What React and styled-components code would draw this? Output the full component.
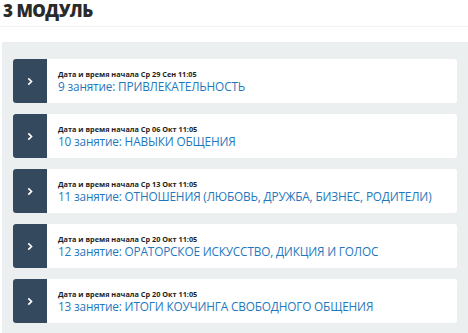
import React from "react";
import styled, { createGlobalStyle } from "styled-components";

const Global = createGlobalStyle`
  html, body { margin: 0; padding: 0; background: #fff; }
  body { font-family: "Open Sans", "Liberation Sans", sans-serif; }
`;

const Page = styled.div`
  width: 468px;
  height: 333px;
  overflow: hidden;
  display: flex;
  flex-direction: column;
`;

const Header = styled.div`
  height: 27px;
  border-bottom: 1px solid #f1f3f3;
  display: flex;
  align-items: flex-start;
  padding-left: 3px;
`;

const Title = styled.h2`
  margin: 0;
  font-family: "Open Sans", sans-serif;
  font-weight: 800;
  font-size: 17px;
  line-height: 22px;
  color: #2a2a2a;
  letter-spacing: -0.5px;
`;

const Panel = styled.div`
  margin: 15px 0 0 2px;
  background: #eceff0;
  padding: 17px 11px 10px 11px;
  display: flex;
  flex-direction: column;
  gap: 11px;
  flex: 1;
`;

const Card = styled.div`
  height: 44px;
  background: #fff;
  border-radius: 3px;
  display: flex;
  overflow: hidden;
`;

const Toggle = styled.div`
  width: 34px;
  flex: none;
  background: #34495e;
  display: flex;
  align-items: center;
  justify-content: center;
  color: #fff;
`;

const Body = styled.div`
  padding-left: 11px;
  display: flex;
  flex-direction: column;
  justify-content: center;
  padding-top: 2px;
`;

const Meta = styled.div`
  font-family: "Open Sans", sans-serif;
  font-weight: 700;
  font-size: 7.3px;
  line-height: 9px;
  color: #1e1e1e;
`;

const Lesson = styled.div`
  font-family: "Open Sans", sans-serif;
  font-size: 11.8px;
  line-height: 15px;
  color: #1f78bd;
  white-space: nowrap;
  letter-spacing: -0.17px;
`;

const Chevron = () => (
  <svg width="8" height="9" viewBox="0 0 8 9">
    <path d="M2.3 1.3 L5.5 4.5 L2.3 7.7" fill="none" stroke="#fff" strokeWidth="1.7" />
  </svg>
);

const lessons = [
  { date: "Ср 29 Сен 11:05", title: "9 занятие: ПРИВЛЕКАТЕЛЬНОСТЬ" },
  { date: "Ср 06 Окт 11:05", title: "10 занятие: НАВЫКИ ОБЩЕНИЯ" },
  { date: "Ср 13 Окт 11:05", title: "11 занятие: ОТНОШЕНИЯ (ЛЮБОВЬ, ДРУЖБА, БИЗНЕС, РОДИТЕЛИ)" },
  { date: "Ср 20 Окт 11:05", title: "12 занятие: ОРАТОРСКОЕ ИСКУССТВО, ДИКЦИЯ И ГОЛОС" },
  { date: "Ср 20 Окт 11:05", title: "13 занятие: ИТОГИ КОУЧИНГА СВОБОДНОГО ОБЩЕНИЯ" },
];

export default function App() {
  return (
    <Page>
      <Global />
      <Header>
        <Title>3 МОДУЛЬ</Title>
      </Header>
      <Panel>
        {lessons.map((l, i) => (
          <Card key={i}>
            <Toggle>
              <Chevron />
            </Toggle>
            <Body>
              <Meta>Дата и время начала {l.date}</Meta>
              <Lesson>{l.title}</Lesson>
            </Body>
          </Card>
        ))}
      </Panel>
    </Page>
  );
}
